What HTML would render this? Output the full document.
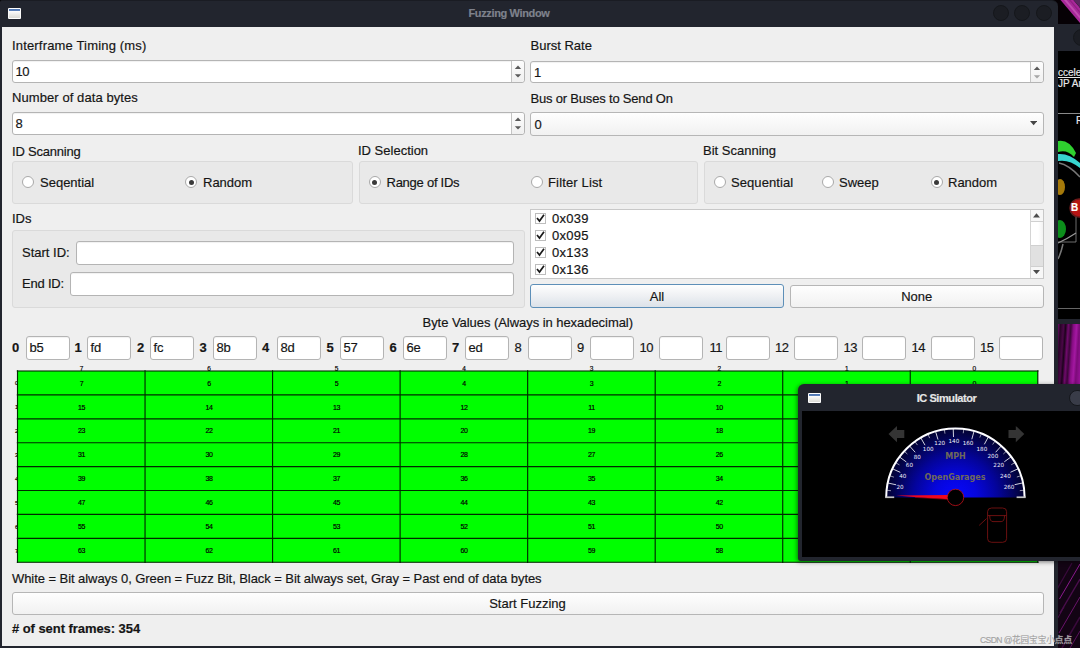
<!DOCTYPE html><html><head><meta charset="utf-8"><title>Fuzzing Window</title><style>
*{box-sizing:border-box;margin:0;padding:0}
html,body{width:1080px;height:648px;overflow:hidden;background:#000}
body{position:relative;font-family:"Liberation Sans","DejaVu Sans",sans-serif;font-size:13px;color:#1b1b1b}
.a{position:absolute}
.t{position:absolute;white-space:nowrap;line-height:16px;height:16px;color:#151515;-webkit-text-stroke:.18px}
.in{position:absolute;background:#fff;border:1px solid #b4b4b4;border-radius:3px;box-shadow:inset 0 1px 1px rgba(0,0,0,.06)}
.gb{position:absolute;background:#e9e9e9;border:1px solid #dadada;border-radius:3px}
.btn{-webkit-text-stroke:.18px;color:#151515;position:absolute;border:1px solid #b6b6b6;border-radius:3px;background:linear-gradient(#fefefe,#f1f1f1);text-align:center;line-height:21px;white-space:nowrap}
.rb{position:absolute;width:12px;height:12px;border-radius:50%;border:1px solid #a9a9a9;background:#fff}
.rb.on::after{content:"";position:absolute;left:2.5px;top:2.5px;width:5px;height:5px;border-radius:50%;background:#3a3a3a}
.cb{position:absolute;width:11px;height:11px;border:1px solid #bdbdbd;background:#fff}
.b{font-weight:bold}
</style></head><body>
<div class="a" id="wall" style="left:1054px;top:0;width:26px;height:648px;background:#12050f"></div>
<svg class="a" style="left:1054px;top:0" width="26" height="24" viewBox="0 0 26 24"><rect width="26" height="24" fill="#060105"/><path d="M6.5 0 L19.5 0 L26 7.7 L26 23 Z" fill="#a8289a"/><path d="M10 0 L12.5 0 L26 16 L26 19 Z" fill="#c04db0"/><path d="M15 0 L16.5 0 L26 11.5 L26 13.2 Z" fill="#8f1f80"/><path d="M19.5 0 L26 0 L26 7.7 Z" fill="#5a2860"/></svg>
<div class="a" style="left:1057px;top:24px;width:23px;height:27px;background:#22252e"></div>
<div class="a" style="left:1073px;top:29px;width:17px;height:17px;border-radius:50%;background:#1b1d23;border:1px solid #15171b"></div>
<div class="a" style="left:1057px;top:51px;width:23px;height:269px;background:#000"></div>
<div class="t" style="left:1058px;top:65.5px;color:#e8e8e8;font-size:10px;line-height:13px;height:13px;text-decoration:underline">ccele</div>
<div class="t" style="left:1058px;top:76.5px;color:#e8e8e8;font-size:10px;line-height:13px;height:13px">JP Ar</div>
<div class="a" style="left:1058px;top:113px;width:22px;height:1px;background:#8a8a8a"></div>
<div class="t" style="left:1076px;top:114px;color:#e8e8e8;font-size:10px;line-height:13px;height:13px">R</div>
<svg class="a" style="left:1057px;top:135px" width="23" height="130" viewBox="0 0 23 130"><path d="M1 6 Q12 4 19 18 L17 22 Q10 14 1 17 Z" fill="#2fd12f"/><path d="M1 19 Q12 18 23 28 L23 33 Q12 24 1 26 Z" fill="#38d6cf"/><path d="M2 28 Q12 30 23 42" stroke="#777" stroke-width="1.5" fill="none"/><ellipse cx="3" cy="52" rx="5" ry="8" fill="#a5790a"/><ellipse cx="22" cy="73" rx="9" ry="9" fill="#b71414" stroke="#6b1a1a" stroke-width="1.5"/><ellipse cx="3" cy="94" rx="6" ry="9" fill="#0c8f1b"/><path d="M19 82 L19 107 L1 107" stroke="#888" stroke-width="0.8" fill="none"/><path d="M1 108 Q10 104 19 98" stroke="#999" stroke-width="1.2" fill="none"/><path d="M6 109 Q4 118 1 124" stroke="#777" stroke-width="1.5" fill="none"/></svg>
<div class="t b" style="left:1071px;top:202px;color:#fff;font-size:10px;line-height:12px;height:12px">B</div>
<div class="a" style="left:1058px;top:308px;width:22px;height:1px;background:#666"></div>
<div class="a" style="left:1057px;top:319px;width:23px;height:5px;background:#22252e"></div>
<div class="a" style="left:1058px;top:324px;width:22px;height:60px;background:linear-gradient(94deg,#6a0c66 0%,#2a0428 10%,#4a0747 22%,#1c031b 30%,#6f0a6b 40%,#3d063b 50%,#860c83 60%,#a418a2 72%,#7c0b79 82%,#9a129a 100%)"></div>
<svg class="a" style="left:1058px;top:561px" width="22" height="87" viewBox="0 0 22 87"><rect width="22" height="87" fill="#130414"/><g stroke-linecap="butt" fill="none"><path d="M-2 30 L14 2" stroke="#3a0a3c" stroke-width="1.2"/><path d="M1.5 38 L22 3" stroke="#8a1a8c" stroke-width="1"/><path d="M2 52 L22 18" stroke="#4a0e4c" stroke-width="1.4"/><path d="M1 72 L22 36" stroke="#6a146c" stroke-width="1"/><path d="M4 87 L22 56" stroke="#3a0a3c" stroke-width="1.5"/><path d="M12 87 L22 70" stroke="#5a105c" stroke-width="1"/><path d="M-3 62 L6 46" stroke="#4a0e4c" stroke-width="1"/></g></svg>
<div class="a" style="left:0;top:0;width:1058px;height:648px;background:#22252e;border-radius:2px 6px 0 0;border-top:1px solid #1a1c23"></div>
<div class="a" style="left:2px;top:27px;width:1052px;height:619px;background:#efefef"></div>
<div class="a" style="left:8px;top:8px;width:13px;height:10.5px;background:linear-gradient(#fff 0,#fff 1px,#4d74b2 1px,#5a80ba 2.5px,#fdfdfd 3px,#dadad4 92%,#fff 93%);border-left:1px solid #fafafa;border-right:1px solid #fafafa;border-radius:1px"></div>
<div class="t b" style="left:0;top:6px;width:1018px;text-align:center;color:#7e828c;font-size:11px;line-height:14px;height:14px;letter-spacing:-.36px">Fuzzing Window</div>
<div class="a" style="left:993px;top:5px;width:16px;height:16px;border-radius:50%;background:#1b1d23;border:1px solid #15171b"></div>
<div class="a" style="left:1014px;top:5px;width:16px;height:16px;border-radius:50%;background:#1b1d23;border:1px solid #15171b"></div>
<div class="a" style="left:1035.5px;top:5px;width:16px;height:16px;border-radius:50%;background:#1b1d23;border:1px solid #15171b"></div>
<div class="t " style="left:12px;top:38px;letter-spacing:.17px">Interframe Timing (ms)</div>
<div class="t " style="left:530.5px;top:38px;">Burst Rate</div>
<div class="t " style="left:12px;top:90px;letter-spacing:.08px">Number of data bytes</div>
<div class="t " style="left:530.5px;top:91px;letter-spacing:-.19px">Bus or Buses to Send On</div>
<div class="t " style="left:12px;top:144px;letter-spacing:-.2px">ID Scanning</div>
<div class="t " style="left:358px;top:143px;">ID Selection</div>
<div class="t " style="left:703px;top:143px;">Bit Scanning</div>
<div class="t " style="left:12px;top:211px;">IDs</div>
<div class="in" style="left:11.5px;top:60px;width:513px;height:22.5px"></div>
<div class="a" style="left:510.5px;top:61px;width:13px;height:20.5px;border-left:1px solid #c4c4c4;background:linear-gradient(#fdfdfd,#f0f0f0);border-radius:0 3px 3px 0"></div>
<svg class="a" style="left:513.5px;top:64px" width="8" height="14" viewBox="0 0 8 14"><path d="M0.8 5 L4 1.6 L7.2 5 Z" fill="#5a5a5a"/><path d="M0.8 10.2 L4 13.6 L7.2 10.2 Z" fill="#5a5a5a"/></svg>
<div class="t " style="left:15.5px;top:64px;letter-spacing:-.4px">10</div>
<div class="in" style="left:530px;top:61px;width:513.5px;height:22px"></div>
<div class="a" style="left:1029.5px;top:62px;width:13px;height:20px;border-left:1px solid #c4c4c4;background:linear-gradient(#fdfdfd,#f0f0f0);border-radius:0 3px 3px 0"></div>
<svg class="a" style="left:1032.5px;top:65px" width="8" height="14" viewBox="0 0 8 14"><path d="M0.8 5 L4 1.6 L7.2 5 Z" fill="#5a5a5a"/><path d="M0.8 10.2 L4 13.6 L7.2 10.2 Z" fill="#a6a6a6"/></svg>
<div class="t " style="left:534px;top:65px;letter-spacing:-.4px">1</div>
<div class="in" style="left:11.5px;top:112px;width:513px;height:22.5px"></div>
<div class="a" style="left:510.5px;top:113px;width:13px;height:20.5px;border-left:1px solid #c4c4c4;background:linear-gradient(#fdfdfd,#f0f0f0);border-radius:0 3px 3px 0"></div>
<svg class="a" style="left:513.5px;top:116px" width="8" height="14" viewBox="0 0 8 14"><path d="M0.8 5 L4 1.6 L7.2 5 Z" fill="#5a5a5a"/><path d="M0.8 10.2 L4 13.6 L7.2 10.2 Z" fill="#5a5a5a"/></svg>
<div class="t " style="left:15.5px;top:116px;letter-spacing:-.4px">8</div>
<div class="btn" style="left:530px;top:112px;width:513.5px;height:24px"></div>
<div class="t " style="left:534.5px;top:116.5px;">0</div>
<svg class="a" style="left:1029.7px;top:121.4px" width="7.2" height="4.4" viewBox="0 0 7.2 4.4"><path d="M0 0 L7.2 0 L3.6 4.2 Z" fill="#454545"/></svg>
<div class="gb" style="left:12px;top:161px;width:340.5px;height:42.5px"></div>
<div class="gb" style="left:358.5px;top:161px;width:339px;height:42.5px"></div>
<div class="gb" style="left:704px;top:161px;width:339.5px;height:42.5px"></div>
<div class="rb " style="left:22px;top:176px"></div>
<div class="t " style="left:40px;top:175px;">Seqential</div>
<div class="rb on" style="left:185px;top:176px"></div>
<div class="t " style="left:203px;top:175px;">Random</div>
<div class="rb on" style="left:368.5px;top:176px"></div>
<div class="t " style="left:386.5px;top:175px;letter-spacing:-.25px">Range of IDs</div>
<div class="rb " style="left:530.5px;top:176px"></div>
<div class="t " style="left:548px;top:175px;letter-spacing:.15px">Filter List</div>
<div class="rb " style="left:713.5px;top:176px"></div>
<div class="t " style="left:731px;top:175px;letter-spacing:.08px">Sequential</div>
<div class="rb " style="left:821.5px;top:176px"></div>
<div class="t " style="left:839px;top:175px;">Sweep</div>
<div class="rb on" style="left:930.5px;top:176px"></div>
<div class="t " style="left:948px;top:175px;">Random</div>
<div class="gb" style="left:12px;top:230px;width:512.5px;height:77.5px"></div>
<div class="t " style="left:22px;top:245px;">Start ID:</div>
<div class="in" style="left:76px;top:241px;width:438px;height:24px"></div>
<div class="t " style="left:22px;top:276px;letter-spacing:-.2px">End ID:</div>
<div class="in" style="left:70px;top:272px;width:444px;height:24px"></div>
<div class="a" style="left:530px;top:209px;width:514px;height:70px;background:#fff;border:1px solid #c8c8c8"></div>
<div class="cb" style="left:534.5px;top:212.5px"></div>
<svg class="a" style="left:536px;top:214.0px" width="9" height="9" viewBox="0 0 9 9"><path d="M1 4 L3.5 7 L8 0.8" stroke="#1a1a1a" stroke-width="1.7" fill="none"/></svg>
<div class="t " style="left:552px;top:211.0px;letter-spacing:.25px">0x039</div>
<div class="cb" style="left:534.5px;top:229.5px"></div>
<svg class="a" style="left:536px;top:231.0px" width="9" height="9" viewBox="0 0 9 9"><path d="M1 4 L3.5 7 L8 0.8" stroke="#1a1a1a" stroke-width="1.7" fill="none"/></svg>
<div class="t " style="left:552px;top:228.0px;letter-spacing:.25px">0x095</div>
<div class="cb" style="left:534.5px;top:246.5px"></div>
<svg class="a" style="left:536px;top:248.0px" width="9" height="9" viewBox="0 0 9 9"><path d="M1 4 L3.5 7 L8 0.8" stroke="#1a1a1a" stroke-width="1.7" fill="none"/></svg>
<div class="t " style="left:552px;top:245.0px;letter-spacing:.25px">0x133</div>
<div class="cb" style="left:534.5px;top:263.5px"></div>
<svg class="a" style="left:536px;top:265.0px" width="9" height="9" viewBox="0 0 9 9"><path d="M1 4 L3.5 7 L8 0.8" stroke="#1a1a1a" stroke-width="1.7" fill="none"/></svg>
<div class="t " style="left:552px;top:262.0px;letter-spacing:.25px">0x136</div>
<div class="a" style="left:1030px;top:210px;width:13px;height:68px;background:#e1e1e1;border-left:1px solid #d4d4d4"></div>
<div class="a" style="left:1031px;top:210px;width:12px;height:12px;background:#f7f7f7;border-bottom:1px solid #d0d0d0"></div>
<div class="a" style="left:1031px;top:222px;width:12px;height:24px;background:linear-gradient(90deg,#fff 60%,#f2f2f2);border-bottom:1px solid #d0d0d0"></div>
<div class="a" style="left:1031px;top:266px;width:12px;height:12px;background:#f7f7f7;border-top:1px solid #d0d0d0"></div>
<svg class="a" style="left:1033.2px;top:213.4px" width="7" height="4.4" viewBox="0 0 7 4.4"><path d="M0 4.4 L3.5 0.3 L7 4.4 Z" fill="#4b4b4b"/></svg>
<svg class="a" style="left:1033.2px;top:269.8px" width="7" height="4.4" viewBox="0 0 7 4.4"><path d="M0 0 L3.5 4.1 L7 0 Z" fill="#4b4b4b"/></svg>
<div class="btn" style="left:530px;top:284px;width:254px;height:24px;line-height:23px;border-color:#5d8fb8;background:linear-gradient(#fefefe,#eef0f3 50%,#dce2e9)">All</div>
<div class="btn" style="left:790px;top:285px;width:253.5px;height:23px">None</div>
<div class="t " style="left:0px;top:314.5px;width:1055.5px;text-align:center;letter-spacing:-.05px">Byte Values (Always in hexadecimal)</div>
<div class="t b" style="left:12px;top:340px;">0</div>
<div class="in" style="left:26px;top:336px;width:44px;height:23.5px"></div>
<div class="t " style="left:29.5px;top:340px;letter-spacing:-.2px">b5</div>
<div class="t b" style="left:74.5px;top:340px;">1</div>
<div class="in" style="left:87px;top:336px;width:44px;height:23.5px"></div>
<div class="t " style="left:90.5px;top:340px;letter-spacing:-.2px">fd</div>
<div class="t b" style="left:137px;top:340px;">2</div>
<div class="in" style="left:150px;top:336px;width:44px;height:23.5px"></div>
<div class="t " style="left:153.5px;top:340px;letter-spacing:-.2px">fc</div>
<div class="t b" style="left:199.5px;top:340px;">3</div>
<div class="in" style="left:213px;top:336px;width:44px;height:23.5px"></div>
<div class="t " style="left:216.5px;top:340px;letter-spacing:-.2px">8b</div>
<div class="t b" style="left:262px;top:340px;">4</div>
<div class="in" style="left:277px;top:336px;width:44px;height:23.5px"></div>
<div class="t " style="left:280.5px;top:340px;letter-spacing:-.2px">8d</div>
<div class="t b" style="left:326.5px;top:340px;">5</div>
<div class="in" style="left:340px;top:336px;width:44px;height:23.5px"></div>
<div class="t " style="left:343.5px;top:340px;letter-spacing:-.2px">57</div>
<div class="t b" style="left:389.5px;top:340px;">6</div>
<div class="in" style="left:403px;top:336px;width:44px;height:23.5px"></div>
<div class="t " style="left:406.5px;top:340px;letter-spacing:-.2px">6e</div>
<div class="t b" style="left:452px;top:340px;">7</div>
<div class="in" style="left:465px;top:336px;width:44px;height:23.5px"></div>
<div class="t " style="left:468.5px;top:340px;letter-spacing:-.2px">ed</div>
<div class="t " style="left:514.5px;top:340px;">8</div>
<div class="in" style="left:528px;top:336px;width:44px;height:23.5px"></div>
<div class="t " style="left:577px;top:340px;">9</div>
<div class="in" style="left:590px;top:336px;width:44px;height:23.5px"></div>
<div class="t " style="left:639.5px;top:340px;letter-spacing:-.5px">10</div>
<div class="in" style="left:659px;top:336px;width:44px;height:23.5px"></div>
<div class="t " style="left:709.5px;top:340px;letter-spacing:-.5px">11</div>
<div class="in" style="left:726px;top:336px;width:44px;height:23.5px"></div>
<div class="t " style="left:775px;top:340px;letter-spacing:-.5px">12</div>
<div class="in" style="left:794px;top:336px;width:44px;height:23.5px"></div>
<div class="t " style="left:843.5px;top:340px;letter-spacing:-.5px">13</div>
<div class="in" style="left:862px;top:336px;width:44px;height:23.5px"></div>
<div class="t " style="left:911.5px;top:340px;letter-spacing:-.5px">14</div>
<div class="in" style="left:931px;top:336px;width:44px;height:23.5px"></div>
<div class="t " style="left:980px;top:340px;letter-spacing:-.5px">15</div>
<div class="in" style="left:999px;top:336px;width:44px;height:23.5px"></div>
<svg class="a" style="left:0;top:360px" width="1054" height="210" viewBox="0 360 1054 210" font-family="Liberation Sans, sans-serif" font-size="7" text-anchor="middle" fill="#000" stroke="#000" stroke-width="0.18" letter-spacing="-0.4"><text x="16.4" y="385.3" font-size="6">0</text><text x="16.4" y="409.2" font-size="6">1</text><text x="16.4" y="433.1" font-size="6">2</text><text x="16.4" y="457.1" font-size="6">3</text><text x="16.4" y="480.9" font-size="6">4</text><text x="16.4" y="504.8" font-size="6">5</text><text x="16.4" y="528.8" font-size="6">6</text><text x="16.4" y="552.7" font-size="6">7</text><text x="81.3" y="370.6" font-size="6.5">7</text><text x="208.8" y="370.6" font-size="6.5">6</text><text x="336.3" y="370.6" font-size="6.5">5</text><text x="463.9" y="370.6" font-size="6.5">4</text><text x="591.4" y="370.6" font-size="6.5">3</text><text x="719.0" y="370.6" font-size="6.5">2</text><text x="846.5" y="370.6" font-size="6.5">1</text><text x="974.0" y="370.6" font-size="6.5">0</text><rect x="17.5" y="371" width="1020.3" height="191.20000000000005" fill="#00ff00"/><line x1="17.50" y1="370.3" x2="17.50" y2="562.9000000000001" stroke="#002a00" stroke-width="1.15"/><line x1="145.04" y1="370.3" x2="145.04" y2="562.9000000000001" stroke="#002a00" stroke-width="1.15"/><line x1="272.57" y1="370.3" x2="272.57" y2="562.9000000000001" stroke="#002a00" stroke-width="1.15"/><line x1="400.11" y1="370.3" x2="400.11" y2="562.9000000000001" stroke="#002a00" stroke-width="1.15"/><line x1="527.65" y1="370.3" x2="527.65" y2="562.9000000000001" stroke="#002a00" stroke-width="1.15"/><line x1="655.19" y1="370.3" x2="655.19" y2="562.9000000000001" stroke="#002a00" stroke-width="1.15"/><line x1="782.72" y1="370.3" x2="782.72" y2="562.9000000000001" stroke="#002a00" stroke-width="1.15"/><line x1="910.26" y1="370.3" x2="910.26" y2="562.9000000000001" stroke="#002a00" stroke-width="1.15"/><line x1="1037.80" y1="370.3" x2="1037.80" y2="562.9000000000001" stroke="#002a00" stroke-width="1.15"/><line x1="16.8" y1="371.00" x2="1038.5" y2="371.00" stroke="#002a00" stroke-width="1.15"/><line x1="16.8" y1="394.90" x2="1038.5" y2="394.90" stroke="#002a00" stroke-width="1.15"/><line x1="16.8" y1="418.80" x2="1038.5" y2="418.80" stroke="#002a00" stroke-width="1.15"/><line x1="16.8" y1="442.70" x2="1038.5" y2="442.70" stroke="#002a00" stroke-width="1.15"/><line x1="16.8" y1="466.60" x2="1038.5" y2="466.60" stroke="#002a00" stroke-width="1.15"/><line x1="16.8" y1="490.50" x2="1038.5" y2="490.50" stroke="#002a00" stroke-width="1.15"/><line x1="16.8" y1="514.40" x2="1038.5" y2="514.40" stroke="#002a00" stroke-width="1.15"/><line x1="16.8" y1="538.30" x2="1038.5" y2="538.30" stroke="#002a00" stroke-width="1.15"/><line x1="16.8" y1="562.20" x2="1038.5" y2="562.20" stroke="#002a00" stroke-width="1.15"/><text x="81.5" y="385.6">7</text><text x="81.5" y="409.5">15</text><text x="81.5" y="433.4">23</text><text x="81.5" y="457.4">31</text><text x="81.5" y="481.2">39</text><text x="81.5" y="505.1">47</text><text x="81.5" y="529.1">55</text><text x="81.5" y="553.0">63</text><text x="209.0" y="385.6">6</text><text x="209.0" y="409.5">14</text><text x="209.0" y="433.4">22</text><text x="209.0" y="457.4">30</text><text x="209.0" y="481.2">38</text><text x="209.0" y="505.1">46</text><text x="209.0" y="529.1">54</text><text x="209.0" y="553.0">62</text><text x="336.5" y="385.6">5</text><text x="336.5" y="409.5">13</text><text x="336.5" y="433.4">21</text><text x="336.5" y="457.4">29</text><text x="336.5" y="481.2">37</text><text x="336.5" y="505.1">45</text><text x="336.5" y="529.1">53</text><text x="336.5" y="553.0">61</text><text x="464.1" y="385.6">4</text><text x="464.1" y="409.5">12</text><text x="464.1" y="433.4">20</text><text x="464.1" y="457.4">28</text><text x="464.1" y="481.2">36</text><text x="464.1" y="505.1">44</text><text x="464.1" y="529.1">52</text><text x="464.1" y="553.0">60</text><text x="591.6" y="385.6">3</text><text x="591.6" y="409.5">11</text><text x="591.6" y="433.4">19</text><text x="591.6" y="457.4">27</text><text x="591.6" y="481.2">35</text><text x="591.6" y="505.1">43</text><text x="591.6" y="529.1">51</text><text x="591.6" y="553.0">59</text><text x="719.2" y="385.6">2</text><text x="719.2" y="409.5">10</text><text x="719.2" y="433.4">18</text><text x="719.2" y="457.4">26</text><text x="719.2" y="481.2">34</text><text x="719.2" y="505.1">42</text><text x="719.2" y="529.1">50</text><text x="719.2" y="553.0">58</text><text x="846.7" y="385.6">1</text><text x="846.7" y="409.5">9</text><text x="846.7" y="433.4">17</text><text x="846.7" y="457.4">25</text><text x="846.7" y="481.2">33</text><text x="846.7" y="505.1">41</text><text x="846.7" y="529.1">49</text><text x="846.7" y="553.0">57</text><text x="974.2" y="385.6">0</text><text x="974.2" y="409.5">8</text><text x="974.2" y="433.4">16</text><text x="974.2" y="457.4">24</text><text x="974.2" y="481.2">32</text><text x="974.2" y="505.1">40</text><text x="974.2" y="529.1">48</text><text x="974.2" y="553.0">56</text></svg>
<div class="t " style="left:12px;top:570.5px;letter-spacing:-.063px">White = Bit always 0, Green = Fuzz Bit, Black = Bit always set, Gray = Past end of data bytes</div>
<div class="btn" style="left:11.5px;top:592px;width:1032px;height:23px">Start Fuzzing</div>
<div class="t b" style="left:12px;top:621px;letter-spacing:-.06px"># of sent frames: 354</div>
<div class="a" style="left:798px;top:384px;width:282px;height:177px;background:#22252e;border-radius:6px 0 0 3px;box-shadow:-1px 1px 4px rgba(0,0,0,.5)"></div>
<div class="a" style="left:802px;top:411px;width:278px;height:146px;background:#000"></div>
<div class="a" style="left:808px;top:392.5px;width:13px;height:10.5px;background:linear-gradient(#fff 0,#fff 1px,#4d74b2 1px,#5a80ba 2.5px,#fdfdfd 3px,#dadad4 92%,#fff 93%);border-left:1px solid #fafafa;border-right:1px solid #fafafa;border-radius:1px"></div>
<div class="t b" style="left:798px;top:391px;width:297px;text-align:center;color:#e6e6e6;font-size:11px;line-height:14px;height:14px;letter-spacing:-.42px">IC Simulator</div>
<div class="a" style="left:1069px;top:389.5px;width:16.5px;height:16.5px;border-radius:50%;background:#393c48;border:1px solid #15171c"></div>
<svg class="a" style="left:802px;top:411px" width="278" height="146" viewBox="802 411 278 146"><defs><radialGradient id="rg" gradientUnits="userSpaceOnUse" cx="955.4" cy="497.6" r="70"><stop offset="0" stop-color="#0808ff"/><stop offset="0.3" stop-color="#0606de"/><stop offset="0.6" stop-color="#04049c"/><stop offset="0.85" stop-color="#030356"/><stop offset="1" stop-color="#02022c"/></radialGradient></defs><path d="M885.1999999999999 497.6 A70.2 70.2 0 0 1 1025.6 497.6 Z" fill="url(#rg)"/><path d="M886.1999999999999 497.6 A69.2 69.2 0 0 1 1024.6 497.6" fill="none" stroke="#fff" stroke-width="2"/><line x1="886.79" y1="490.27" x2="890.97" y2="490.71" stroke="#f4f4fa" stroke-width="0.6"/><line x1="887.96" y1="483.02" x2="896.17" y2="484.79" stroke="#f4f4fa" stroke-width="0.85"/><line x1="889.93" y1="475.82" x2="893.91" y2="477.15" stroke="#f4f4fa" stroke-width="0.6"/><line x1="892.66" y1="468.88" x2="900.30" y2="472.37" stroke="#f4f4fa" stroke-width="0.85"/><line x1="895.83" y1="462.79" x2="899.45" y2="464.91" stroke="#f4f4fa" stroke-width="0.6"/><line x1="899.58" y1="457.04" x2="906.37" y2="461.98" stroke="#f4f4fa" stroke-width="0.85"/><line x1="904.28" y1="451.25" x2="907.40" y2="454.07" stroke="#f4f4fa" stroke-width="0.6"/><line x1="909.59" y1="446.00" x2="915.17" y2="452.28" stroke="#f4f4fa" stroke-width="0.85"/><line x1="914.99" y1="441.67" x2="917.45" y2="445.08" stroke="#f4f4fa" stroke-width="0.6"/><line x1="920.80" y1="437.90" x2="925.01" y2="445.17" stroke="#f4f4fa" stroke-width="0.85"/><line x1="928.00" y1="434.27" x2="929.66" y2="438.13" stroke="#f4f4fa" stroke-width="0.6"/><line x1="935.57" y1="431.51" x2="937.99" y2="439.56" stroke="#f4f4fa" stroke-width="0.85"/><line x1="944.31" y1="429.50" x2="944.98" y2="433.64" stroke="#f4f4fa" stroke-width="0.6"/><line x1="953.23" y1="428.63" x2="953.50" y2="437.03" stroke="#f4f4fa" stroke-width="0.85"/><line x1="963.75" y1="429.11" x2="963.24" y2="433.28" stroke="#f4f4fa" stroke-width="0.6"/><line x1="974.07" y1="431.17" x2="971.80" y2="439.26" stroke="#f4f4fa" stroke-width="0.85"/><line x1="981.36" y1="433.67" x2="979.78" y2="437.56" stroke="#f4f4fa" stroke-width="0.6"/><line x1="988.32" y1="436.96" x2="984.32" y2="444.34" stroke="#f4f4fa" stroke-width="0.85"/><line x1="995.03" y1="441.11" x2="992.61" y2="444.55" stroke="#f4f4fa" stroke-width="0.6"/><line x1="1001.21" y1="446.00" x2="995.63" y2="452.28" stroke="#f4f4fa" stroke-width="0.85"/><line x1="1006.43" y1="451.16" x2="1003.33" y2="453.99" stroke="#f4f4fa" stroke-width="0.6"/><line x1="1011.08" y1="456.85" x2="1004.30" y2="461.81" stroke="#f4f4fa" stroke-width="0.85"/><line x1="1014.88" y1="462.63" x2="1011.26" y2="464.76" stroke="#f4f4fa" stroke-width="0.6"/><line x1="1018.09" y1="468.77" x2="1010.46" y2="472.28" stroke="#f4f4fa" stroke-width="0.85"/><line x1="1020.83" y1="475.71" x2="1016.85" y2="477.04" stroke="#f4f4fa" stroke-width="0.6"/><line x1="1022.82" y1="482.90" x2="1014.61" y2="484.69" stroke="#f4f4fa" stroke-width="0.85"/><line x1="1024.00" y1="490.21" x2="1019.83" y2="490.66" stroke="#f4f4fa" stroke-width="0.6"/><rect x="885.1999999999999" y="496.40000000000003" width="9" height="1.7" fill="#c4c4c4"/><rect x="1016.5999999999999" y="496.40000000000003" width="9" height="1.7" fill="#c4c4c4"/><text x="900" y="489.0" font-family="DejaVu Sans, sans-serif" font-size="5.6" fill="#f0f0fa" text-anchor="middle">20</text><text x="902.8" y="477.59999999999997" font-family="DejaVu Sans, sans-serif" font-size="5.6" fill="#f0f0fa" text-anchor="middle">40</text><text x="909.4" y="466.7" font-family="DejaVu Sans, sans-serif" font-size="5.6" fill="#f0f0fa" text-anchor="middle">60</text><text x="917.2" y="458.5" font-family="DejaVu Sans, sans-serif" font-size="5.6" fill="#f0f0fa" text-anchor="middle">80</text><text x="928.2" y="451.0" font-family="DejaVu Sans, sans-serif" font-size="5.6" fill="#f0f0fa" text-anchor="middle">100</text><text x="939.7" y="445.4" font-family="DejaVu Sans, sans-serif" font-size="5.6" fill="#f0f0fa" text-anchor="middle">120</text><text x="953.9" y="443.0" font-family="DejaVu Sans, sans-serif" font-size="5.6" fill="#f0f0fa" text-anchor="middle">140</text><text x="968" y="445.4" font-family="DejaVu Sans, sans-serif" font-size="5.6" fill="#f0f0fa" text-anchor="middle">160</text><text x="981.9" y="451.09999999999997" font-family="DejaVu Sans, sans-serif" font-size="5.6" fill="#f0f0fa" text-anchor="middle">180</text><text x="992.9" y="458.4" font-family="DejaVu Sans, sans-serif" font-size="5.6" fill="#f0f0fa" text-anchor="middle">200</text><text x="998.7" y="466.79999999999995" font-family="DejaVu Sans, sans-serif" font-size="5.6" fill="#f0f0fa" text-anchor="middle">220</text><text x="1005.4" y="477.7" font-family="DejaVu Sans, sans-serif" font-size="5.6" fill="#f0f0fa" text-anchor="middle">240</text><text x="1009.1" y="488.9" font-family="DejaVu Sans, sans-serif" font-size="5.6" fill="#f0f0fa" text-anchor="middle">260</text><text x="955.5" y="458.9" font-family="DejaVu Sans, sans-serif" font-weight="bold" font-size="8" fill="#6f6959" text-anchor="middle">MPH</text><text x="955" y="479.9" font-family="DejaVu Sans, sans-serif" font-weight="bold" font-size="8" fill="#6f6959" text-anchor="middle">OpenGarages</text><path d="M896 495.6 L948 494.9 L948 499.3 L920 497.6 Z" fill="#f0061e"/><path d="M915 497.4 L948 499.4" stroke="#9a0412" stroke-width="0.6"/><circle cx="955.5" cy="497.4" r="8.2" fill="#000" stroke="#c4101a" stroke-width="0.8"/><path d="M888.5 434 L897 425.9 L897 429.9 L904.3 429.9 L904.3 438.1 L897 438.1 L897 442.2 Z" fill="#343434"/><path d="M1024.3 434 L1015.8 425.9 L1015.8 429.9 L1008.5 429.9 L1008.5 438.1 L1015.8 438.1 L1015.8 442.2 Z" fill="#343434"/><g fill="none" stroke="#8e1616" stroke-width="0.75"><rect x="987.6" y="508" width="19" height="34.3" rx="4" ry="3.6"/><path d="M987.8 515.6 L1006.4 515.6"/><path d="M989.7 515.6 Q989.7 521.6 993 521.6 L1001.2 521.6 Q1004.5 521.6 1004.5 515.6"/><path d="M986.5 518.6 L979.2 525.4"/></g></svg>
<div class="t" style="left:980px;top:632.5px;font-family:&quot;Liberation Sans&quot;,&quot;Noto Sans CJK SC&quot;,sans-serif;font-size:8.6px;line-height:14px;height:14px;color:#a2a2a2;text-shadow:0 0 1px rgba(255,255,255,.7)"><span style="letter-spacing:-.6px">CSDN @</span>花园宝宝小点点</div>
</body></html>
